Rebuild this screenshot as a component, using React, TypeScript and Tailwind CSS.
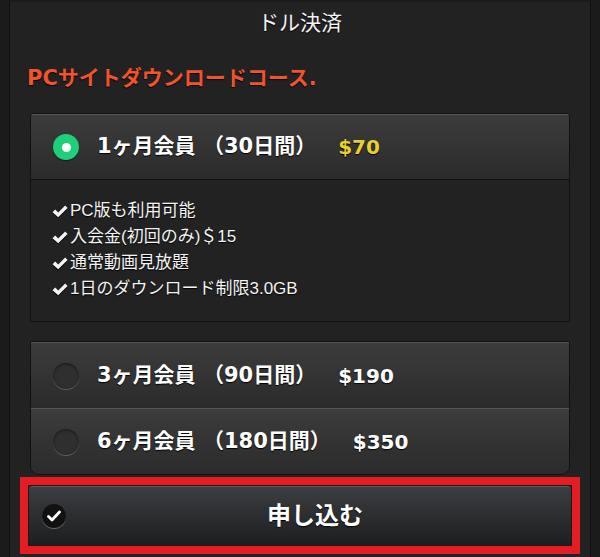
import React from "react";

const headFont = { fontFamily: '"DejaVu Sans", "Noto Sans CJK JP", sans-serif' };
const listFont = { fontFamily: '"Liberation Sans", "Noto Sans CJK JP", sans-serif' };

function GreenRadio() {
  return (
    <div className="w-[26px] h-[26px] rounded-full bg-[#1fd07a] flex items-center justify-center shrink-0 shadow-[0_1px_1px_rgba(0,0,0,0.5)]">
      <div className="w-[9px] h-[9px] rounded-full bg-white" />
    </div>
  );
}

function EmptyRadio() {
  return (
    <div className="w-[26px] h-[26px] rounded-full bg-[#2f2f2f] shrink-0 shadow-[inset_0_1px_3px_rgba(0,0,0,0.5),0_1px_0_rgba(255,255,255,0.22)]" />
  );
}

function HeavyCheck() {
  return (
    <svg width="16" height="13" viewBox="0 0 16 13" className="shrink-0 mr-[2px] drop-shadow-[0_1px_0_#000]">
      <path d="M0.5 7.2 L3.2 4.6 L6.2 7.4 L13.2 0.6 L15.6 3 L6.2 12.2 Z" fill="#f4f4f4" />
    </svg>
  );
}

function Row({
  radio,
  label,
  price,
  priceColor,
  extra,
}: {
  radio: React.ReactNode;
  label: string;
  price: string;
  priceColor: string;
  extra?: string;
}) {
  return (
    <div
      className={`h-[66px] flex items-center pl-[22px] bg-linear-to-b from-[#3c3c3c] to-[#2b2b2b] border-t border-t-[#575757] ${extra ?? ""}`}
    >
      {radio}
      <div
        className="ml-[18px] text-[21px] font-bold text-white [text-shadow:0_1px_1px_#000] flex items-center whitespace-pre"
        style={headFont}
      >
        <span>{label}</span>
        <span className={`ml-[22px] text-[20px] ${priceColor}`}>{price}</span>
      </div>
    </div>
  );
}

export default function App() {
  const features = [
    "PC版も利用可能",
    "入会金(初回のみ)＄15",
    "通常動画見放題",
    "1日のダウンロード制限3.0GB",
  ];
  return (
    <div className="w-[600px] h-[557px] bg-[#1b1b1b] px-[9px] overflow-hidden">
      <div className="h-full bg-[#222222] border-x border-[#111111] border-t-[2px] border-t-[#1a1a1a]">
        <div
          className="h-[42px] flex items-center justify-center text-[21px] text-[#f2f2f2] [text-shadow:0_1px_1px_#000]"
          style={listFont}
        >
          ドル決済
        </div>
        <div
          className="mt-[22px] pl-[17px] h-[26px] flex items-center text-[21px] font-bold text-[#f0542a] [text-shadow:0_1px_1px_#000]"
          style={headFont}
        >
          PCサイトダウンロードコース.
        </div>

        <div className="mx-[20px] mt-[21px] border border-[#111111] rounded-t-[3px] overflow-hidden">
          <Row
            radio={<GreenRadio />}
            label="1ヶ月会員 （30日間）"
            price="$70"
            priceColor="text-[#e8d02c]"
            extra="h-[65px] border-b border-b-[#111111] shadow-[0_2px_3px_rgba(0,0,0,0.4)]"
          />
          <div
            className="bg-[#222222] pt-[18px] pb-[19px] pl-[21px] text-[17px] leading-[26px] text-[#f4f4f4] [text-shadow:0_1px_1px_#000]"
            style={listFont}
          >
            {features.map((f) => (
              <div key={f} className="flex items-center">
                <HeavyCheck />
                <span>{f}</span>
              </div>
            ))}
          </div>
        </div>

        <div className="mx-[20px] mt-[19px] border border-[#111111] rounded-b-[9px] overflow-hidden">
          <Row
            radio={<EmptyRadio />}
            label="3ヶ月会員 （90日間）"
            price="$190"
            priceColor="text-white"
          />
          <Row
            radio={<EmptyRadio />}
            label="6ヶ月会員 （180日間）"
            price="$350"
            priceColor="text-white"
          />
        </div>

        <div className="mx-[10px] mt-[2px] border-[8px] border-[#e41d24] p-[1px] bg-[#1b1b1b]">
          <div className="h-[59px] rounded-[4px] bg-linear-to-b from-[#3d3e41] to-[#1d1e20] border-t border-t-[#5a5b5e] flex items-center relative">
            <div className="absolute left-[13px] top-1/2 -translate-y-1/2 w-[24px] h-[24px] rounded-full bg-[#111111] flex items-center justify-center shadow-[0_1px_0_rgba(255,255,255,0.3)]">
              <svg width="14" height="12" viewBox="0 0 14 12">
                <path d="M1.5 6.5 L5 10 L12.5 2" fill="none" stroke="#fff" strokeWidth="2.8" strokeLinecap="round" strokeLinejoin="round" />
              </svg>
            </div>
            <div
              className="flex-1 text-center text-[24px] font-bold text-white pl-[30px] [text-shadow:0_1px_1px_#000]"
              style={headFont}
            >
              申し込む
            </div>
          </div>
        </div>
      </div>
    </div>
  );
}
